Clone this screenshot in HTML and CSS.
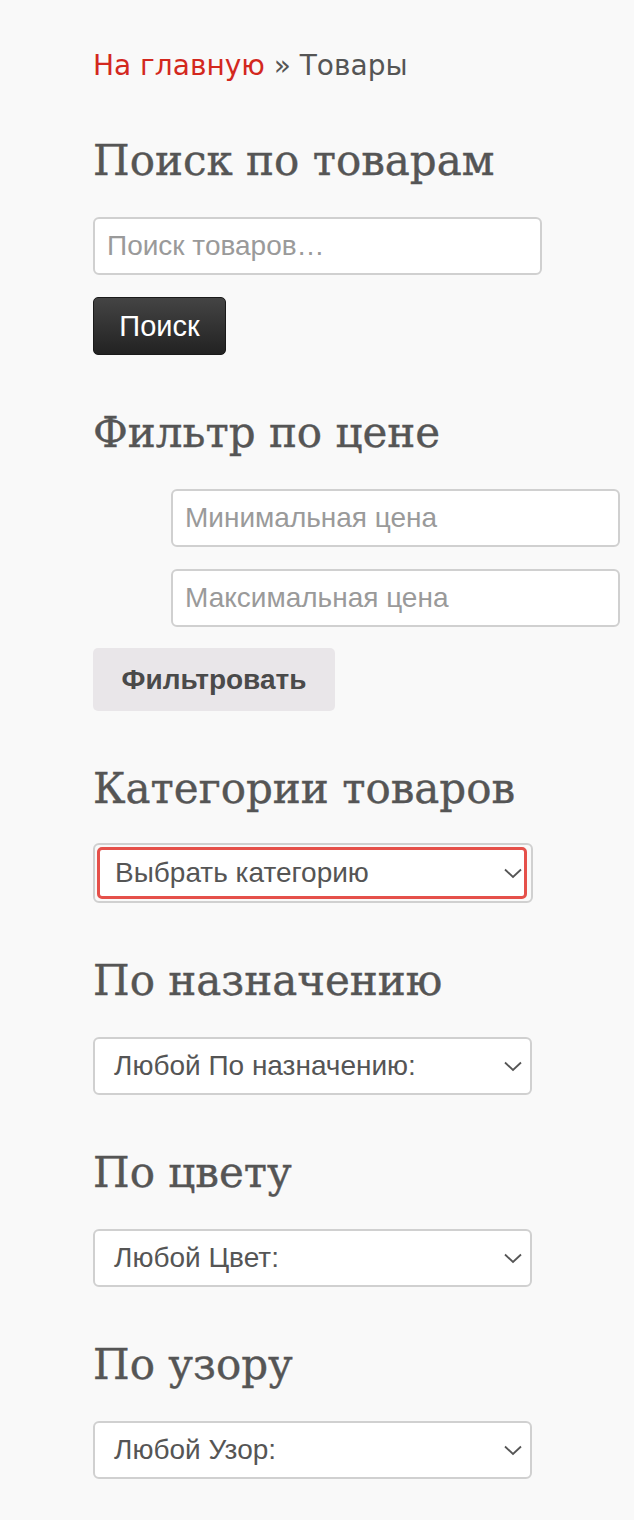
FILE: index.html
```html
<!DOCTYPE html>
<html lang="ru">
<head>
<meta charset="utf-8">
<link rel="stylesheet" href="styles.css">
</head>
<body>
<div class="page">
  <nav class="crumbs"><a href="#" class="crumbs-link">На главную</a> » Товары</nav>

  <section class="widget w-search">
    <h2 class="widget-title">Поиск по товарам</h2>
    <input class="field" type="text" placeholder="Поиск товаров…">
    <button class="btn-dark">Поиск</button>
  </section>

  <section class="widget w-price">
    <h2 class="widget-title">Фильтр по цене</h2>
    <div class="price-fields">
      <input class="field field-price" type="text" placeholder="Минимальная цена">
      <input class="field field-price" type="text" placeholder="Максимальная цена">
    </div>
    <button class="btn-light">Фильтровать</button>
  </section>

  <section class="widget w-cat">
    <h2 class="widget-title">Категории товаров</h2>
    <div class="select-wrap select-focus">
      <div class="select select-red">Выбрать категорию<span class="chev"><svg width="18" height="11" viewBox="0 0 18 11"><path d="M1 1.5 L9 9 L17 1.5" fill="none" stroke="#555" stroke-width="1.8"/></svg></span></div>
    </div>
  </section>

  <section class="widget">
    <h2 class="widget-title">По назначению</h2>
    <div class="select">Любой По назначению:<span class="chev"><svg width="18" height="11" viewBox="0 0 18 11"><path d="M1 1.5 L9 9 L17 1.5" fill="none" stroke="#555" stroke-width="1.8"/></svg></span></div>
  </section>

  <section class="widget">
    <h2 class="widget-title">По цвету</h2>
    <div class="select">Любой Цвет:<span class="chev"><svg width="18" height="11" viewBox="0 0 18 11"><path d="M1 1.5 L9 9 L17 1.5" fill="none" stroke="#555" stroke-width="1.8"/></svg></span></div>
  </section>

  <section class="widget">
    <h2 class="widget-title">По узору</h2>
    <div class="select">Любой Узор:<span class="chev"><svg width="18" height="11" viewBox="0 0 18 11"><path d="M1 1.5 L9 9 L17 1.5" fill="none" stroke="#555" stroke-width="1.8"/></svg></span></div>
  </section>
</div>
</body>
</html>
```

FILE: styles.css
```css
html, body {
  margin: 0;
  padding: 0;
  background: #f9f9f9;
}
.page {
  padding: 46px 0 0 93px;
  color: #555;
}
.crumbs {
  font-family: "DejaVu Sans", Verdana, sans-serif;
  font-size: 28px;
  line-height: 40px;
  color: #555;
}
.crumbs-link {
  color: #d3281e;
  text-decoration: none;
}
.widget {
  display: flex;
  flex-direction: column;
  align-items: flex-start;
}
.widget-title {
  font-family: "DejaVu Serif", Georgia, serif;
  font-weight: normal;
  font-size: 42px;
  line-height: 60px;
  color: #555;
  -webkit-text-stroke: 0.4px #555;
  margin: 48px 0 26px;
  padding: 0;
}
.w-search .widget-title { margin-top: 45px; }
.w-cat .widget-title { margin-bottom: 24px; }
.field {
  box-sizing: border-box;
  width: 449px;
  height: 58px;
  border: 2px solid #d0d0d0;
  border-radius: 6px;
  background: #fff;
  padding: 0 12px;
  font-family: "Liberation Sans", Arial, sans-serif;
  font-size: 28px;
  color: #555;
  outline: none;
}
.field::placeholder { color: #9a9a9a; }
.btn-dark {
  margin-top: 22px;
  box-sizing: border-box;
  width: 133px;
  height: 58px;
  border: 1px solid #1a1a1a;
  border-radius: 5px;
  background: linear-gradient(#444, #222);
  color: #fff;
  font-family: "Liberation Sans", Arial, sans-serif;
  font-size: 29px;
  padding: 0;
}
.price-fields {
  display: flex;
  flex-direction: column;
  gap: 22px;
  padding-left: 78px;
}
.btn-light {
  margin-top: 21px;
  box-sizing: border-box;
  width: 242px;
  height: 63px;
  border: none;
  border-radius: 5px;
  background: #e9e6e9;
  color: #4a4a4a;
  font-family: "Liberation Sans", Arial, sans-serif;
  font-weight: bold;
  font-size: 28px;
  padding: 0;
}
.select {
  box-sizing: border-box;
  width: 439px;
  height: 58px;
  border: 2px solid #d0d0d0;
  border-radius: 6px;
  background: #fff;
  display: flex;
  align-items: center;
  justify-content: space-between;
  padding: 0 8px 0 19px;
  font-family: "Liberation Sans", Arial, sans-serif;
  font-size: 28px;
  color: #555;
}
.chev { display: flex; }
.select-focus {
  box-sizing: border-box;
  width: 440px;
  border: 2px solid #d0d0d0;
  border-radius: 6px;
  padding: 2px;
  background: #f9f9f9;
}
.select-red {
  width: 430px;
  height: 52px;
  border: 3px solid #e5504a;
  border-radius: 5px;
  padding-left: 15px;
  padding-right: 2px;
}
```
